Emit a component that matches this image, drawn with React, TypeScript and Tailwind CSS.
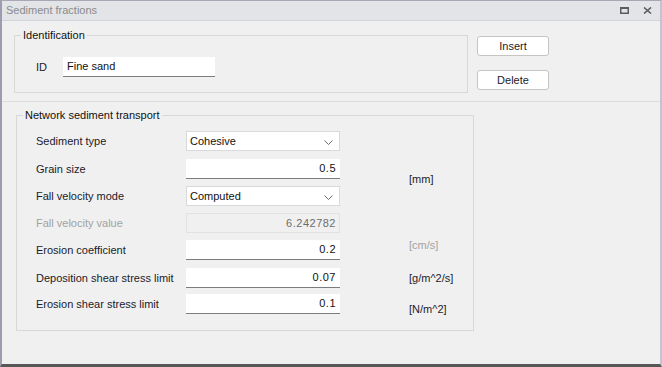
import type { ReactNode } from "react";

const font = { fontFamily: '"Liberation Sans", Arial, sans-serif' };

function Chevron() {
    return (
        <svg width="9" height="5" viewBox="0 0 9 5" className="absolute right-[6px] top-[8px]">
            <path d="M0.5 0.5 L4.5 4.5 L8.5 0.5" fill="none" stroke="#6a6a6a" strokeWidth="1" />
        </svg>
    );
}

function Select({ value }: { value: string }) {
    return (
        <div className="relative w-[154px] h-[20px] bg-white border border-[#d9d9d9] pl-[3px] text-[11px] leading-[18px] text-[#111]">
            {value}
            <Chevron />
        </div>
    );
}

function NumInput({ value, disabled }: { value: string; disabled?: boolean }) {
    return (
        <div
            className={
                disabled
                    ? "w-[154px] h-[20px] bg-[#f0f0f0] border border-[#e2e2e2] text-right pr-[3px] text-[11px] leading-[18px] text-[#6d6d6d] tracking-[0.5px]"
                    : "w-[154px] h-[20px] bg-white border-b border-[#7c7c7c] text-right pr-[4px] text-[11px] leading-[19px] text-[#111] tracking-[0.5px]"
            }
        >
            {value}
        </div>
    );
}

function Row({ label, mt, muted, children }: { label: string; mt: string; muted?: boolean; children: ReactNode }) {
    return (
        <div className={`flex items-center ${mt}`}>
            <div className={`w-[150px] text-[11px] ${muted ? "text-[#a2a2a2]" : "text-[#1b1b2b]"}`}>{label}</div>
            {children}
        </div>
    );
}

export default function App() {
    return (
        <div
            className="w-[662px] h-[367px] bg-[#f0f0f0] border-l-2 border-l-[#9c9cae] border-r-2 border-r-[#c3c3d3] border-t border-t-[#a8a8b4] border-b-[3px] border-b-[#575757] flex flex-col overflow-hidden"
            style={font}
        >
            <div className="h-[20px] shrink-0 bg-[#e3e4e8] border-b border-[#d3d4da] flex items-center justify-between pl-[4px] pr-[8px]">
                <span className="text-[11px] text-[#8a8a8a]">Sediment fractions</span>
                <div className="flex items-center gap-[14px]">
                    <svg width="9" height="7" viewBox="0 0 9 7">
                        <rect x="0.75" y="0.75" width="7.5" height="5.5" fill="none" stroke="#5c5c5c" strokeWidth="1.5" />
                        <rect x="0" y="0" width="9" height="2" fill="#5c5c5c" />
                    </svg>
                    <svg width="9" height="7" viewBox="0 0 9 7">
                        <path d="M1 0.5 L8 6.5 M8 0.5 L1 6.5" stroke="#5c5c5c" strokeWidth="1.6" />
                    </svg>
                </div>
            </div>

            <div className="flex items-start pt-[14px] pl-[12px]">
                <div className="relative w-[454px] h-[58px] border border-[#d8d8d8]">
                    <span className="absolute -top-[9px] left-[6px] bg-[#f0f0f0] px-[2px] text-[11px] text-[#111]">
                        Identification
                    </span>
                    <div className="flex items-center pt-[21px] pl-[21px]">
                        <span className="w-[27px] text-[11px] text-[#1b1b2b]">ID</span>
                        <div className="w-[152px] h-[20px] bg-white border-b border-[#7c7c7c] pl-[4px] text-[11px] leading-[19px] text-[#111]">
                            Fine sand
                        </div>
                    </div>
                </div>
                <div className="flex flex-col gap-[14px] ml-[9px] mt-[1px]">
                    <button className="w-[72px] h-[20px] bg-white border border-[#c4c4c4] rounded-[3px] text-[11px] text-[#1b1b2b]">
                        Insert
                    </button>
                    <button className="w-[72px] h-[20px] bg-white border border-[#c4c4c4] rounded-[3px] text-[11px] text-[#1b1b2b]">
                        Delete
                    </button>
                </div>
            </div>

            <div className="mt-[8px] h-px bg-[#dcdcdc]" />

            <div className="relative ml-[14px] mt-[13px] w-[458px] h-[216px] border border-[#d8d8d8]">
                <span className="absolute -top-[9px] left-[6px] bg-[#f0f0f0] px-[2px] text-[11px] text-[#111]">
                    Network sediment transport
                </span>
                <div className="flex pl-[19px]">
                    <div className="flex flex-col">
                        <Row label="Sediment type" mt="mt-[15px]">
                            <Select value="Cohesive" />
                        </Row>
                        <Row label="Grain size" mt="mt-[8px]">
                            <NumInput value="0.5" />
                        </Row>
                        <Row label="Fall velocity mode" mt="mt-[7px]">
                            <Select value="Computed" />
                        </Row>
                        <Row label="Fall velocity value" mt="mt-[7px]" muted>
                            <NumInput value="6.242782" disabled />
                        </Row>
                        <Row label="Erosion coefficient" mt="mt-[7px]">
                            <NumInput value="0.2" />
                        </Row>
                        <Row label="Deposition shear stress limit" mt="mt-[8px]">
                            <NumInput value="0.07" />
                        </Row>
                        <Row label="Erosion shear stress limit" mt="mt-[6px]">
                            <NumInput value="0.1" />
                        </Row>
                    </div>
                    <div className="flex flex-col ml-[69px] text-[11px] leading-[14px]">
                        <span className="mt-[56px] text-[#1b1b2b]">[mm]</span>
                        <span className="mt-[52px] text-[#a2a2a2]">[cm/s]</span>
                        <span className="mt-[19px] text-[#1b1b2b]">[g/m^2/s]</span>
                        <span className="mt-[17px] text-[#1b1b2b]">[N/m^2]</span>
                    </div>
                </div>
            </div>
        </div>
    );
}
